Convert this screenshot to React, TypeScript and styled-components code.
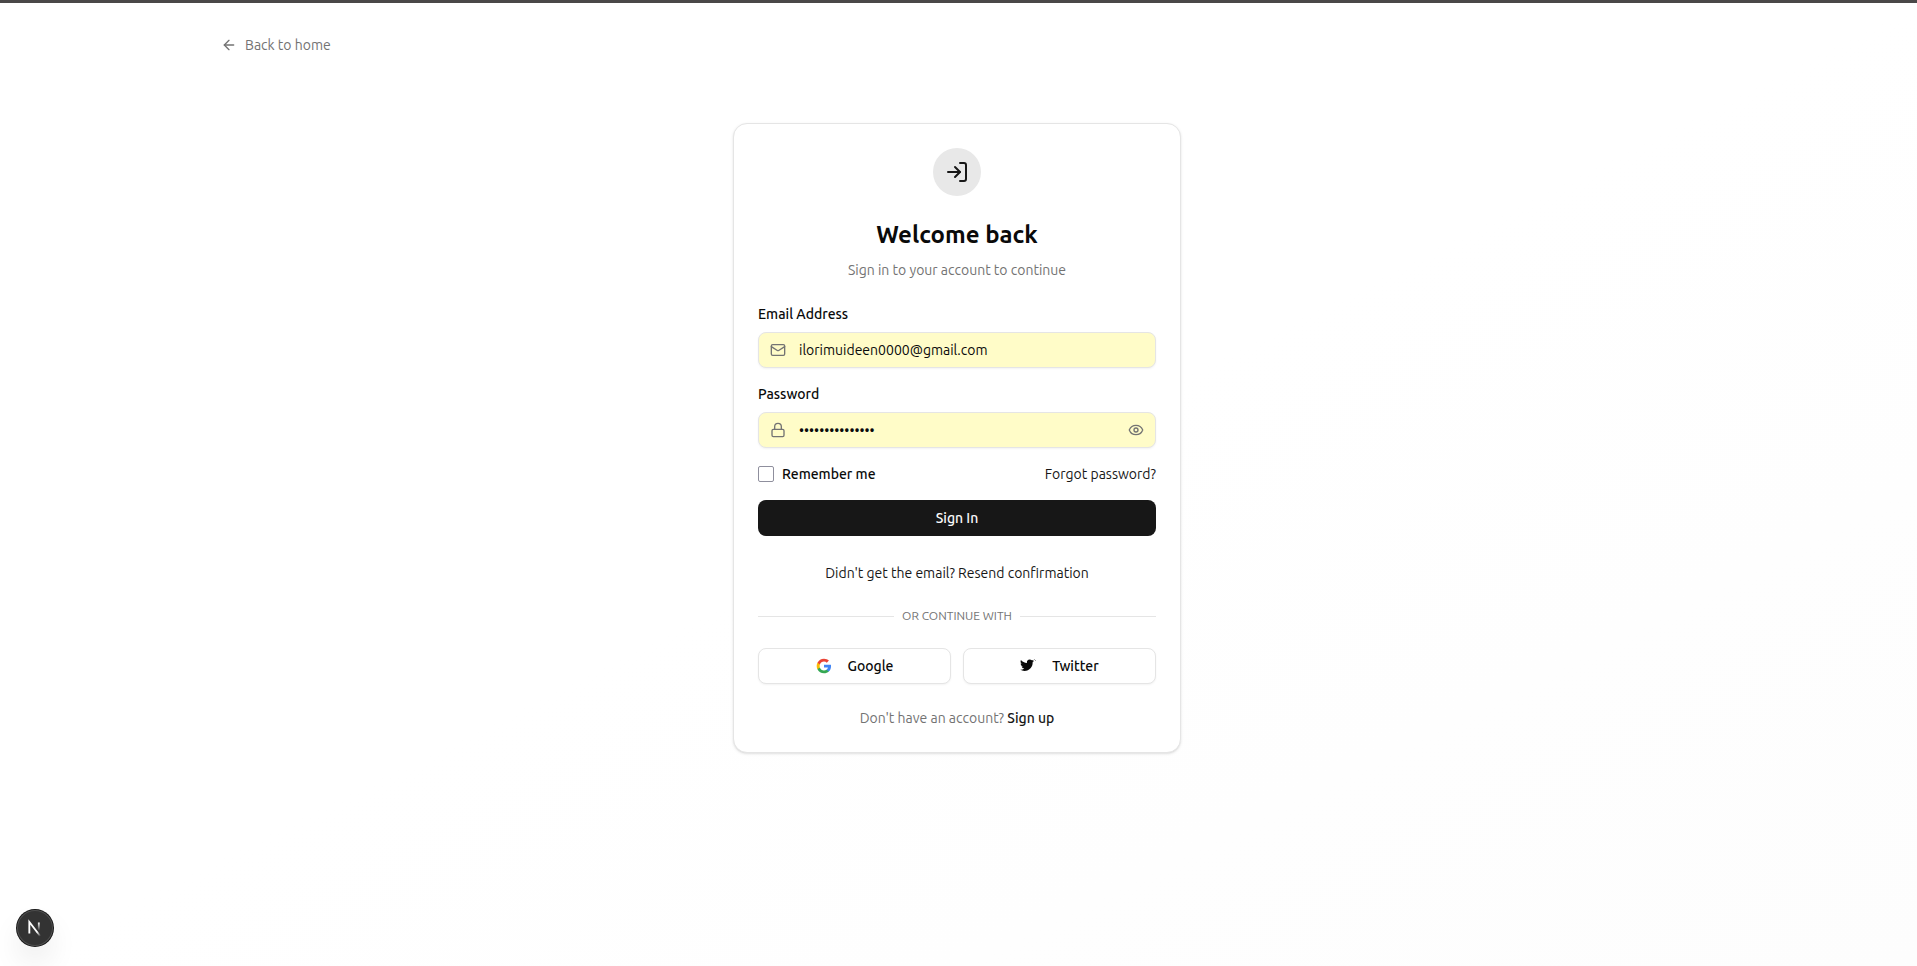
import React, { useState } from "react";
import styled, { createGlobalStyle, css } from "styled-components";
import { ArrowLeft, Eye, Lock, LogIn, Mail } from "lucide-react";

const GlobalStyle = createGlobalStyle`
  *, *::before, *::after { box-sizing: border-box; }
  body {
    margin: 0;
    color: #0a0a0a;
    background: #ffffff;
    font-family: Ubuntu, "Noto Sans", sans-serif;
    font-size: 14px;
    line-height: 20px;
  }
  h1, p { margin: 0; }
  button, input { font: inherit; color: inherit; }
  a { text-decoration: none; }
`;

const Page = styled.div`
  display: flex;
  flex-direction: column;
  min-height: 100vh;
  padding-right: 3px;
  border-top: 3px solid #4a4848;
  background: linear-gradient(to bottom right, #ffffff, #ffffff 50%, #fdfdfd);
`;

const Header = styled.header`
  display: flex;
  width: 100%;
  max-width: 1536px;
  margin: 0 auto;
  padding: 32px;
`;

const BackLink = styled.a`
  display: flex;
  align-items: center;
  gap: 8px;
  color: #737373;
`;

const Main = styled.main`
  display: flex;
  justify-content: center;
  padding: 36px 16px;
`;

const Card = styled.section`
  display: flex;
  flex-direction: column;
  gap: 24px;
  width: 100%;
  max-width: 448px;
  padding: 24px;
  border: 1px solid #e5e5e5;
  border-radius: 14px;
  background: #ffffff;
  box-shadow: 0 1px 3px rgba(0, 0, 0, 0.1), 0 1px 2px -1px rgba(0, 0, 0, 0.1);
`;

const CardHeader = styled.div`
  display: flex;
  flex-direction: column;
  align-items: center;
  gap: 8px;
`;

const IconCircle = styled.div`
  display: grid;
  place-items: center;
  width: 48px;
  height: 48px;
  margin-bottom: 14px;
  border-radius: 50%;
  background: #e8e8e8;
  color: #171717;
`;

const Title = styled.h1`
  font-size: 24px;
  font-weight: 700;
  line-height: 34px;
`;

const Muted = styled.p`
  color: #737373;
  text-align: center;
`;

const Form = styled.form`
  display: flex;
  flex-direction: column;
  gap: 16px;
`;

const Field = styled.div`
  display: flex;
  flex-direction: column;
  gap: 8px;
`;

const Label = styled.label`
  font-weight: 500;
`;

const InputBox = styled.div`
  display: flex;
  align-items: center;
  gap: 12px;
  height: 36px;
  padding: 0 11px;
  border: 1px solid #e5e5e5;
  border-radius: 8px;
  background: #fffcc8;
  color: #737373;
  box-shadow: 0 1px 2px rgba(0, 0, 0, 0.05);
`;

const TextInput = styled.input`
  flex: 1;
  min-width: 0;
  padding: 0 1px;
  border: 0;
  outline: 0;
  background: transparent;
  color: #0a0a0a;
`;

const IconButton = styled.button`
  display: flex;
  padding: 0;
  border: 0;
  background: transparent;
  color: #737373;
  cursor: pointer;
`;

const Options = styled.div`
  display: flex;
  align-items: center;
  justify-content: space-between;
`;

const Remember = styled.div`
  display: flex;
  align-items: center;
  gap: 8px;
`;

const Checkbox = styled.input`
  appearance: none;
  width: 16px;
  height: 16px;
  margin: 0;
  border: 1px solid #8f8f9d;
  border-radius: 2px;
  background: #ffffff;
  &:checked { background: #171717; }
`;

const TextLink = styled.a<{ $strong?: boolean }>`
  color: #171717;
  font-weight: ${(p) => (p.$strong ? 500 : 400)};
`;

const Button = styled.button<{ $outline?: boolean }>`
  display: flex;
  align-items: center;
  justify-content: center;
  gap: 16px;
  height: 36px;
  padding: 0 16px;
  border: 0;
  border-radius: 8px;
  background: #171717;
  color: #fafafa;
  font-weight: 500;
  cursor: pointer;
  ${(p) =>
    p.$outline &&
    css`
      border: 1px solid #e5e5e5;
      background: #ffffff;
      color: #0a0a0a;
      box-shadow: 0 1px 2px rgba(0, 0, 0, 0.05);
    `}
`;

const Resend = styled.p`
  padding: 3px 0 1px;
  text-align: center;
`;

const Divider = styled.div`
  display: flex;
  align-items: center;
  gap: 8px;
  color: #737373;
  font-size: 12px;
  line-height: 16px;
  text-transform: uppercase;
  &::before, &::after {
    content: "";
    flex: 1;
    height: 1px;
    background: #e5e5e5;
  }
`;

const Providers = styled.div`
  display: grid;
  grid-template-columns: 1fr 1fr;
  gap: 12px;
`;

const DevBadge = styled.button`
  position: fixed;
  left: 17px;
  bottom: 20px;
  width: 36px;
  height: 36px;
  padding: 0;
  border: 0;
  border-radius: 50%;
  background: #333333;
  box-shadow: 0 0 0 1px #171717, inset 0 0 0 1px rgba(255, 255, 255, 0.14),
    0 16px 32px -8px rgba(0, 0, 0, 0.24);
  cursor: pointer;
  svg { display: block; }
`;

const GoogleLogo = () => (
  <svg width="16" height="16" viewBox="0 0 24 24" aria-hidden="true">
    <path fill="#4285F4" d="M22.56 12.25c0-.78-.07-1.53-.2-2.25H12v4.26h5.92c-.26 1.37-1.04 2.53-2.21 3.31v2.77h3.57c2.08-1.92 3.28-4.74 3.28-8.09z" />
    <path fill="#34A853" d="M12 23c2.97 0 5.46-.98 7.28-2.66l-3.57-2.77c-.98.66-2.23 1.06-3.71 1.06-2.86 0-5.29-1.93-6.16-4.53H2.18v2.84C3.99 20.53 7.7 23 12 23z" />
    <path fill="#FBBC05" d="M5.84 14.09c-.22-.66-.35-1.36-.35-2.09s.13-1.43.35-2.09V7.07H2.18C1.43 8.55 1 10.22 1 12s.43 3.45 1.18 4.93l2.85-2.22.81-.62z" />
    <path fill="#EA4335" d="M12 5.38c1.62 0 3.06.56 4.21 1.64l3.15-3.15C17.45 2.09 14.97 1 12 1 7.7 1 3.99 3.47 2.18 7.07l3.66 2.84c.87-2.6 3.3-4.53 6.16-4.53z" />
  </svg>
);

const TwitterLogo = () => (
  <svg width="16" height="16" viewBox="0 0 24 24" fill="currentColor" aria-hidden="true">
    <path
      transform="translate(0 0.2) scale(0.88)"
      d="M23.953 4.57a10 10 0 01-2.825.775 4.958 4.958 0 002.163-2.723c-.951.555-2.005.959-3.127 1.184a4.92 4.92 0 00-8.384 4.482C7.69 8.095 4.067 6.13 1.64 3.162a4.822 4.822 0 00-.666 2.475c0 1.71.87 3.213 2.188 4.096a4.904 4.904 0 01-2.228-.616v.06a4.923 4.923 0 003.946 4.827 4.996 4.996 0 01-2.212.085 4.936 4.936 0 004.604 3.417 9.867 9.867 0 01-6.102 2.105c-.39 0-.779-.023-1.17-.067a13.995 13.995 0 007.557 2.209c9.053 0 13.998-7.496 13.998-13.985 0-.21 0-.42-.015-.63A9.935 9.935 0 0024 4.59z"
    />
    <circle cx="22" cy="2.4" r="0.6" />
    <circle cx="23.2" cy="4" r="0.6" />
  </svg>
);

const NextLogo = () => (
  <svg width="36" height="36" viewBox="0 0 36 36" fill="none" aria-hidden="true">
    <g transform="translate(10 11)">
      <path d="M13.3 15.2 L2.34 1 V12.6" stroke="url(#diagonal)" strokeWidth="1.86" />
      <path d="M11.825 1.5 V13.1" stroke="url(#stem)" strokeWidth="1.86" />
    </g>
    <defs>
      <linearGradient id="diagonal" x1="9.96" y1="11.12" x2="15.48" y2="17.97" gradientUnits="userSpaceOnUse">
        <stop stopColor="white" />
        <stop offset="0.6" stopColor="white" stopOpacity="0" />
        <stop offset="1" stopColor="white" stopOpacity="0" />
      </linearGradient>
      <linearGradient id="stem" x1="11.82" y1="1.4" x2="11.79" y2="9.63" gradientUnits="userSpaceOnUse">
        <stop stopColor="white" />
        <stop offset="1" stopColor="white" stopOpacity="0" />
      </linearGradient>
    </defs>
  </svg>
);

export default function App() {
  const [visible, setVisible] = useState(false);

  return (
    <>
      <GlobalStyle />
      <Page>
        <Header>
          <BackLink href="#home">
            <ArrowLeft size={16} />
            Back to home
          </BackLink>
        </Header>
        <Main>
          <Card>
            <CardHeader>
              <IconCircle>
                <LogIn size={24} />
              </IconCircle>
              <Title>Welcome back</Title>
              <Muted>Sign in to your account to continue</Muted>
            </CardHeader>

            <Form onSubmit={(e) => e.preventDefault()}>
              <Field>
                <Label htmlFor="email">Email Address</Label>
                <InputBox>
                  <Mail size={16} />
                  <TextInput id="email" type="email" defaultValue="ilorimuideen0000@gmail.com" />
                </InputBox>
              </Field>
              <Field>
                <Label htmlFor="password">Password</Label>
                <InputBox>
                  <Lock size={16} />
                  <TextInput id="password" type={visible ? "text" : "password"} defaultValue="correcthorse123" />
                  <IconButton type="button" aria-label="Show password" onClick={() => setVisible(!visible)}>
                    <Eye size={16} />
                  </IconButton>
                </InputBox>
              </Field>
              <Options>
                <Remember>
                  <Checkbox id="remember" type="checkbox" />
                  <Label htmlFor="remember">Remember me</Label>
                </Remember>
                <TextLink href="#forgot">Forgot password?</TextLink>
              </Options>
              <Button type="submit">Sign In</Button>
            </Form>

            <Resend>
              <TextLink href="#resend">Didn't get the email? Resend confirmation</TextLink>
            </Resend>

            <Divider>Or continue with</Divider>

            <Providers>
              <Button type="button" $outline>
                <GoogleLogo />
                Google
              </Button>
              <Button type="button" $outline>
                <TwitterLogo />
                Twitter
              </Button>
            </Providers>

            <Muted>
              Don't have an account? <TextLink href="#signup" $strong>Sign up</TextLink>
            </Muted>
          </Card>
        </Main>
      </Page>
      <DevBadge type="button" aria-label="Open developer tools">
        <NextLogo />
      </DevBadge>
    </>
  );
}
